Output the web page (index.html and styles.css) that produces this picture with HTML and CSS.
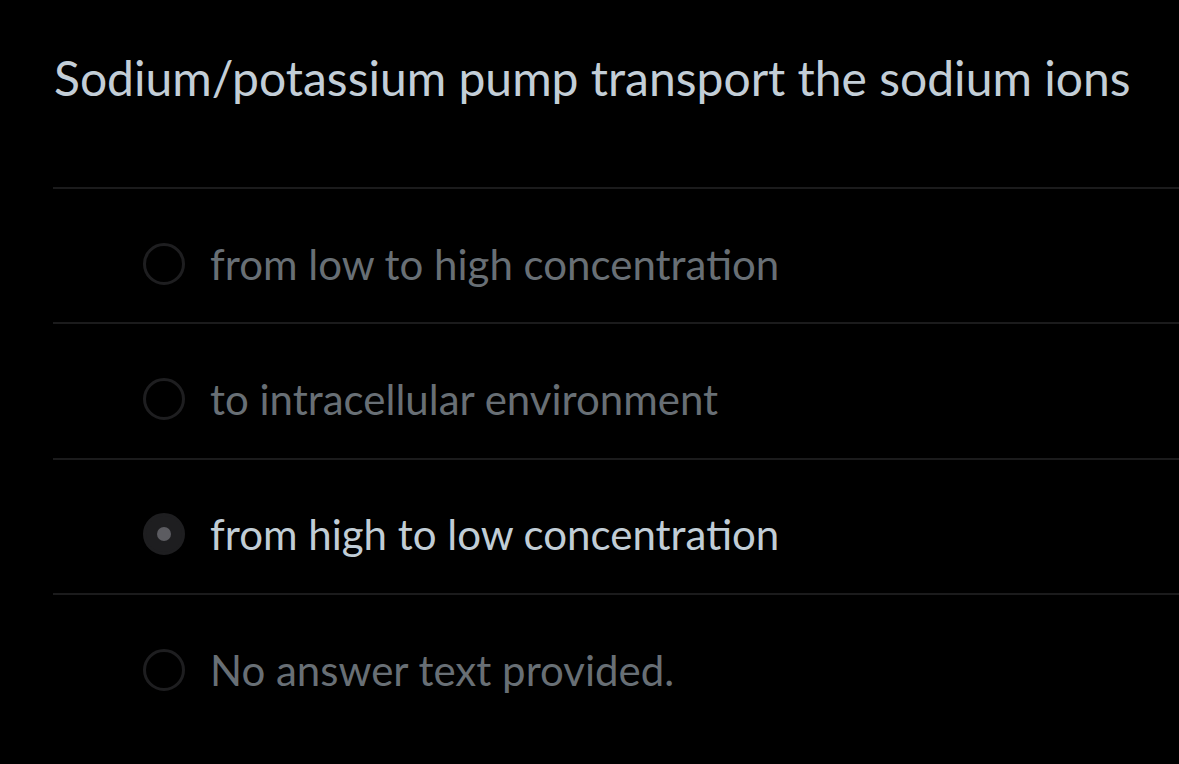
FILE: index.html
```html
<!DOCTYPE html>
<html lang="en">
<head>
<meta charset="utf-8">
<title>Question</title>
<link rel="stylesheet" href="styles.css">
</head>
<body>
<div class="question">
  <h1 class="prompt">Sodium/potassium pump transport the sodium ions</h1>
  <ul class="answers">
    <li class="answer"><span class="radio"></span><span class="label">from low to high concentration</span></li>
    <li class="answer"><span class="radio"></span><span class="label">to intracellular environment</span></li>
    <li class="answer selected"><span class="radio"></span><span class="label">from high to low concentration</span></li>
    <li class="answer"><span class="radio"></span><span class="label">No answer text provided.</span></li>
  </ul>
</div>
</body>
</html>
```

FILE: styles.css
```css
html, body {
  margin: 0;
  padding: 0;
  background: #000;
  width: 1179px;
  height: 764px;
  overflow: hidden;
}
.question {
  padding-left: 53px;
  font-family: Lato, "Noto Sans", sans-serif;
}
.prompt {
  margin: 0;
  padding: 50px 0 0 1px;
  height: 187px;
  box-sizing: border-box;
  font-size: 48px;
  font-weight: 400;
  line-height: 56px;
  color: #c3ced7;
  white-space: nowrap;
}
.answers {
  list-style: none;
  margin: 0;
  padding: 0;
}
.answer {
  display: flex;
  align-items: center;
  gap: 25px;
  height: 135.4px;
  box-sizing: border-box;
  border-top: 2px solid #1b1b1c;
  padding: 16px 0 0 90px;
  font-size: 42px;
  color: #686f75;
}
.radio {
  flex: none;
  width: 42px;
  height: 42px;
  box-sizing: border-box;
  border: 3px solid #1e1e20;
  border-radius: 50%;
  display: flex;
  align-items: center;
  justify-content: center;
}
.selected {
  color: #c1cdd6;
}
.selected .radio {
  background: #1e1e20;
}
.selected .radio::after {
  content: "";
  width: 14px;
  height: 14px;
  border-radius: 50%;
  background: #5c5c61;
}
.label {
  white-space: nowrap;
}
```
